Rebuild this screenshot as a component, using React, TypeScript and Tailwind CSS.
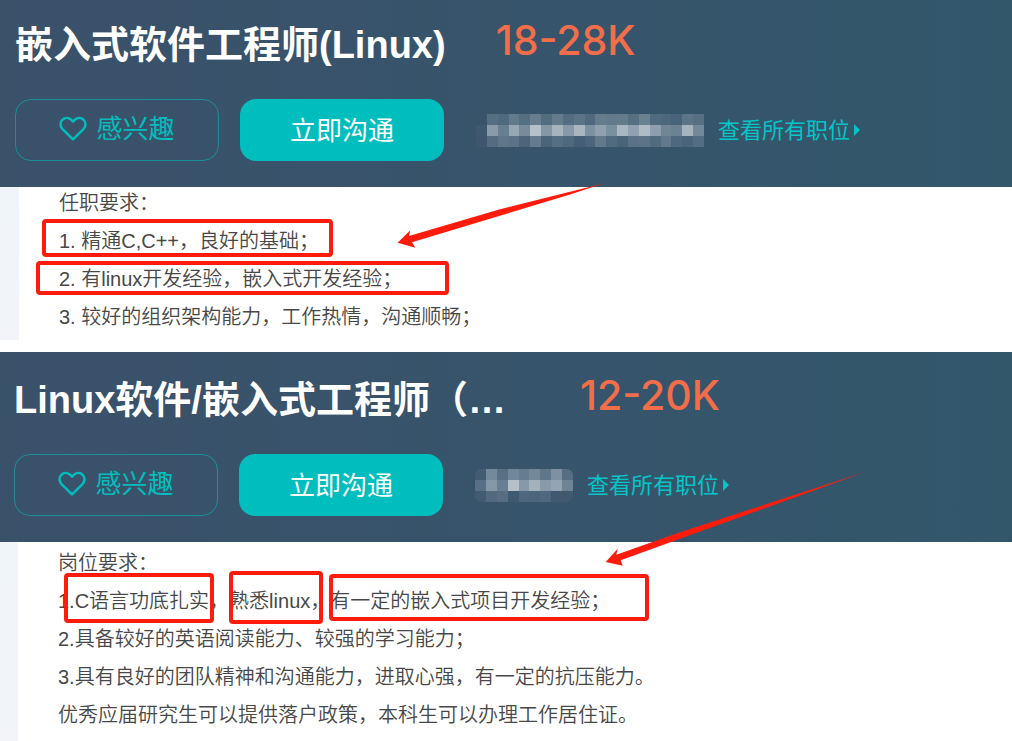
import React from "react";

const CELL = 11;

function Mosaic({ rows, className, label }: { rows: string[][]; className: string; label: string }) {
  const cols = rows[0].length;
  return (
    <svg
      role="img"
      aria-label={label}
      className={className}
      viewBox={`0 0 ${cols * CELL} ${rows.length * CELL}`}
      preserveAspectRatio="none"
      shapeRendering="crispEdges"
    >
      {rows.map((row, y) =>
        row.map((fill, x) => (
          <rect key={`${x}-${y}`} x={x * CELL} y={y * CELL} width={CELL} height={CELL} fill={fill} />
        )),
      )}
    </svg>
  );
}

const LONG_NAME = [
  ["#39536b", "#566e82", "#4f697e", "#617a8c", "#546e82", "#677e8e", "#526c80", "#637b8d", "#536c81", "#5b7387", "#50697e", "#657c8c", "#627a8b", "#637b8b", "#566f83", "#6a8190", "#506a80", "#4d677d", "#48627a", "#5c7488", "#566f83"],
  ["#40586f", "#8b99aa", "#687e91", "#98a7b4", "#778c9b", "#b6c2cb", "#8597a5", "#a5b4bd", "#8799a8", "#a9b6c0", "#7d91a1", "#90a0af", "#7b909f", "#a9b7c2", "#92a1b1", "#b0bcc5", "#8f9fb0", "#708697", "#6c8294", "#a5b4be", "#738999"],
  ["#3e566e", "#546b80", "#60778b", "#5b7287", "#4c657b", "#657b8e", "#4a647a", "#566e83", "#4e687e", "#435e76", "#4c657b", "#62798c", "#506a80", "#496379", "#5a7187", "#5c7388", "#506a7e", "#61788d", "#4e687e", "#4a647b", "#536d82"],
];

const SHORT_NAME = [
  ["#435c73", "#74899b", "#586f84", "#71879a", "#667d90", "#73899a", "#5f778a", "#7d91a2", "#556e83"],
  ["#586f85", "#8598a7", "#687e93", "#b5c0c9", "#8799a9", "#a2b1bb", "#899bab", "#93a4b2", "#6d8396"],
  ["#435b72", "#52697f", "#566d82", "#3e5970", "#4e677c", "#4c657b", "#4f687f", "#40596f", "#40596f"],
];

function Heart() {
  return (
    <svg aria-hidden="true" className="mb-[2px] h-7 w-7 shrink-0" viewBox="0 0 28 28" fill="none" stroke="#00bebd" strokeWidth="2.5" strokeLinejoin="round">
      <path d="M14 25.4 3.3 14.9C.9 12.4.9 8.2 3.3 5.8c2.5-2.5 6.2-2.5 8.7-.2l2 2 2-2c2.5-2.3 6.2-2.3 8.7.2 2.4 2.4 2.4 6.6 0 9.1Z" />
    </svg>
  );
}

function Mark({ className }: { className: string }) {
  return <span aria-hidden="true" className={`pointer-events-none absolute z-10 rounded-[4px] border-4 border-[#ff1c0c] ${className}`} />;
}

function Arrow({ points, className, viewBox }: { points: string; className: string; viewBox: string }) {
  return (
    <svg aria-hidden="true" className={`pointer-events-none absolute z-10 ${className}`} viewBox={viewBox}>
      <polygon points={points} fill="#ff1c0c" />
    </svg>
  );
}

type HeaderProps = {
  title: string;
  salary: string;
  name: React.ReactNode;
  className: string;
  titleClass: string;
};

function JobHeader({ title, salary, name, className, titleClass }: HeaderProps) {
  return (
    <header className={`bg-linear-to-r from-[#3a516a] via-[#37546b] to-[#32576b] pb-[26px] ${className}`}>
      <div className="flex items-start whitespace-nowrap">
        <h2 className={`text-[38px] leading-[54px] font-bold text-white ${titleClass}`}>{title}</h2>
        <span className="font-[Inter,sans-serif] text-[41px] leading-[44px] font-medium text-[#f26d49]">{salary}</span>
      </div>
      <div className="mt-[27px] flex items-center whitespace-nowrap">
        <button type="button" className="flex h-[62px] w-[204px] items-center justify-center gap-[9px] rounded-[16px] border border-[#1b8f98] pb-[2px] text-[26px] text-[#00bebd]">
          <Heart />
          感兴趣
        </button>
        <button type="button" className="ml-[21px] h-[62px] w-[204px] rounded-[16px] bg-[#00bebd] pt-[2px] text-[26px] text-white">
          立即沟通
        </button>
        {name}
        <a href="#jobs" className="ml-[14px] flex items-center gap-1 text-[22px] text-[#00c6c8]">
          查看所有职位
          <svg aria-hidden="true" className="h-3 w-[6px]" viewBox="0 0 6 12">
            <path d="M0 0 6 6 0 12Z" fill="currentColor" />
          </svg>
        </a>
      </div>
    </header>
  );
}

export default function App() {
  return (
    <main className="min-h-screen bg-white font-['Liberation_Sans','Noto_Sans_CJK_SC',sans-serif]">
      <article>
        <JobHeader
          title="嵌入式软件工程师(Linux)"
          salary="18-28K"
          className="pt-[18px] pl-[15px]"
          titleClass="mr-[50px]"
          name={<Mosaic rows={LONG_NAME} label="公司名称" className="ml-8 h-[33px] w-[228px]" />}
        />
        <section className="relative mb-3 flex text-[20px] leading-[38px] font-[350] text-[#484848]">
          <div className="w-[19px] shrink-0 bg-linear-to-b from-[#f0f5f9] to-[#f2f4f9]" />
          <div className="pb-1 pl-10">
            <p className="mb-[3px] leading-8">任职要求：</p>
            <p>1. 精通C,C++，良好的基础；</p>
            <p>2. 有linux开发经验，嵌入式开发经验；</p>
            <p>3. 较好的组织架构能力，工作热情，沟通顺畅；</p>
          </div>
          <Mark className="top-8 left-[42px] h-[38px] w-[291px]" />
          <Mark className="top-[74px] left-[36px] h-[34px] w-[413px]" />
          <Arrow
            className="-top-[7px] left-[390px] h-[80px] w-[220px]"
            viewBox="390 180 220 80"
            points="397.6,242.7 410.3,230.3 409,236 500,209.3 605,183 570,194.5 480,221.7 412,242.3 415.3,247.7"
          />
        </section>
      </article>
      <article>
        <JobHeader
          title="Linux软件/嵌入式工程师（…"
          salary="12-20K"
          className="pt-[21px] pl-[14px]"
          titleClass="mr-[74px]"
          name={<Mosaic rows={SHORT_NAME} label="公司名称" className="ml-8 h-[33px] w-[98px] rounded-[6px]" />}
        />
        <section className="relative flex text-[20px] leading-[38px] font-[350] text-[#484848]">
          <div className="w-[18px] shrink-0 bg-linear-to-b from-[#f0f5f9] to-[#f2f4f9]" />
          <div className="pt-[2px] pb-[7px] pl-10">
            <p>岗位要求：</p>
            <p>1.C语言功底扎实，熟悉linux，有一定的嵌入式项目开发经验；</p>
            <p>2.具备较好的英语阅读能力、较强的学习能力；</p>
            <p>3.具有良好的团队精神和沟通能力，进取心强，有一定的抗压能力。</p>
            <p>优秀应届研究生可以提供落户政策，本科生可以办理工作居住证。</p>
          </div>
          <Mark className="top-[31px] left-[64px] h-[50px] w-[150px]" />
          <Mark className="top-[29px] left-[229px] h-[53px] w-[94px]" />
          <Mark className="top-8 left-[329px] h-[47px] w-[320px]" />
          <Arrow
            className="-top-[72px] left-[600px] h-[100px] w-[270px]"
            viewBox="600 470 270 100"
            points="605.7,562 617.7,548.7 616.3,554.7 680,532.3 865,472 680,538.7 620.7,560.3 622.7,565.7"
          />
        </section>
      </article>
    </main>
  );
}
